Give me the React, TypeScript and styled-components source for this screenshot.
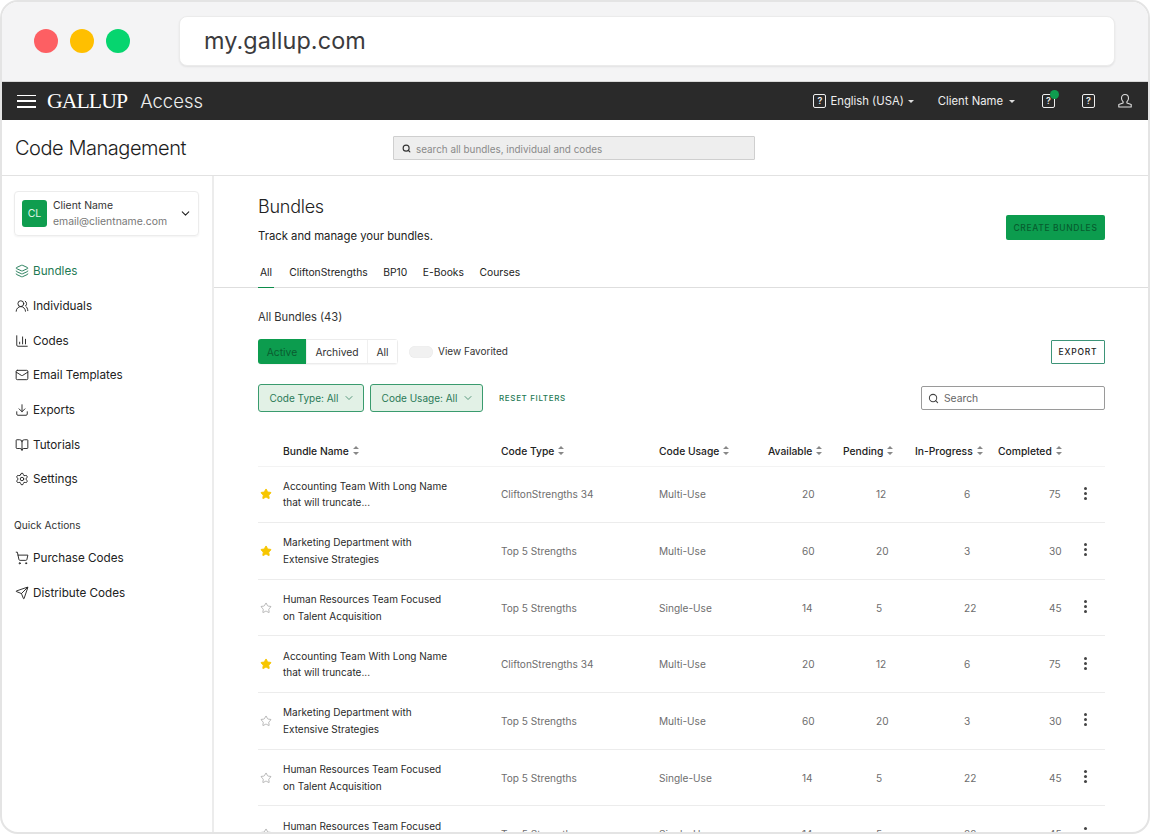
import React from 'react';
import styled, { createGlobalStyle } from 'styled-components';
import { Layers, UsersRound, ChartColumn, Mail, Download, BookOpen, Settings, ShoppingCart, Send, Star, Search, ChevronDown } from 'lucide-react';

const Global = createGlobalStyle`
  html, body { margin: 0; padding: 0; background: #fff; }
  body { font-family: Inter, "Liberation Sans", sans-serif; color: #222; }
  * { box-sizing: border-box; }
`;
const Frame = styled.div`
  width: 1150px; height: 834px; overflow: hidden; border: 2px solid #e4e4e4; border-radius: 18px;
  display: flex; flex-direction: column; background: #fff;
`;
const Chrome = styled.div`
  height: 80px; flex: none; background: #f4f4f5; display: flex; align-items: center;
  padding: 0 33px 2px 32px; gap: 49px; border-bottom: 1px solid #d8d8d8;
`;
const Dots = styled.div`display: flex; gap: 12px;`;
const Dot = styled.span<{ $c: string }>`width: 24px; height: 24px; border-radius: 50%; background: ${p => p.$c};`;
const Url = styled.div`
  flex: 1; height: 50px; background: #fff; border-radius: 8px; border: 1px solid #ebebeb; box-shadow: 0 1px 2px rgba(0,0,0,.08);
  display: flex; align-items: center; padding-left: 24px; font-size: 23.4px; color: #3b3b3d; letter-spacing: .1px;
`;
const TopBar = styled.div`
  height: 38px; flex: none; background: #2a2a2a; color: #f2f2f2; display: flex; align-items: center; padding: 0 15px 0 15px;
`;
const Burger = styled.div`
  width: 19px; height: 13px; margin-right: 10px; display: flex; flex-direction: column; justify-content: space-between;
  i { height: 1.5px; background: #fff; display: block; }
`;
const Logo = styled.span`font-family: "Liberation Serif", serif; font-size: 21.7px; letter-spacing: -.9px; color: #fff; margin-right: 13px; margin-left: 1px;`;
const Product = styled.span`font-size: 18.5px; font-weight: 300; color: #eee;`;
const Spacer = styled.div`flex: 1;`;
const TopItem = styled.span<{ $ml?: number }>`font-size: 11.3px; display: flex; align-items: center; gap: 4px; color: #eee; margin-left: ${p => p.$ml ?? 0}px;`;
const Caret = styled.i<{ $ml?: number }>`width: 0; height: 0; border: 3px solid transparent; border-top: 3.5px solid #ddd; border-bottom: 0; margin-left: ${p => p.$ml ?? 0}px;`;
const HelpBox = styled.span`
  position: relative; width: 13px; height: 14px; border: 1.3px solid #eee; border-radius: 2px; font-size: 9px; line-height: 12px; text-align: center; font-weight: 600; color: #eee; display: inline-block;
`;
const NotifDot = styled.b`position: absolute; width: 9px; height: 9px; border-radius: 50%; background: #0f9d4f; top: -5px; right: -5px;`;
const TopGroup = styled.div`display: flex; align-items: center;`;
const PageHead = styled.div`
  height: 56px; flex: none; display: flex; align-items: center; border-bottom: 1px solid #e2e2e2; padding-left: 13px;
`;
const PageTitle = styled.h1`margin: 0; padding-top: 1px; width: 378px; font-size: 20px; font-weight: 300; color: #1d1d1d; letter-spacing: -.45px;`;
const GlobalSearch = styled.div`
  width: 362px; height: 24px; background: #eeeeee; border: 1px solid #cfcfcf; display: flex; align-items: center; gap: 5px; padding: 2px 0 0 8px;
  font-size: 9.9px; color: #8a8a8a; border-radius: 1px;
`;
const Body = styled.div`flex: 1; display: flex; min-height: 0;`;
const Side = styled.aside`width: 212px; flex: none; border-right: 2px solid #ececec; padding: 15px 14px 0 12px;`;
const Account = styled.div`
  width: 185px; height: 45px; border: 1px solid #ececec; border-radius: 4px; box-shadow: 0 1px 2px rgba(0,0,0,.05); display: flex; align-items: center; padding: 0 6px 0 7px; gap: 6px; margin-bottom: 18px;
`;
const Avatar = styled.div`width: 25px; height: 27px; border-radius: 3px; background: #0f9d4f; color: #dff5e8; font-size: 10.5px; display: flex; align-items: center; justify-content: center;`;
const AccountText = styled.div`flex: 1; line-height: 15.5px; font-size: 10.4px; color: #333; span { display: block; color: #777; }`;
const NavItem = styled.div<{ $on?: boolean }>`
  height: 34.7px; display: flex; align-items: center; gap: 4px; padding-left: 1px; font-size: 11.7px; color: ${p => p.$on ? '#1f7a55' : '#222'};
  svg { flex: none; color: ${p => p.$on ? '#1f7a55' : '#222'}; }
`;
const QuickLabel = styled.div`font-size: 10.2px; color: #333; margin: 19px 0 7px; line-height: 18px;`;
const Main = styled.main`flex: 1; min-width: 0; overflow: hidden;`;
const Head = styled.div`height: 112px; padding: 18px 43px 0 44px; border-bottom: 1px solid #dedede; display: flex; position: relative;`;
const HeadText = styled.div`flex: 1;`;
const H2 = styled.h2`margin: 0; font-size: 18px; font-weight: 300; color: #222; line-height: 25px; letter-spacing: -.25px;`;
const Sub = styled.p`margin: 8px 0 0; font-size: 11.3px; color: #222; line-height: 18px;`;
const Create = styled.button`
  width: 99px; height: 25px; margin-top: 21px; background: #0c9c4e; border: 0; border-radius: 2px; color: #075c2f; font: 500 8.5px Inter, sans-serif; letter-spacing: .65px;
`;
const Tabs = styled.div`position: absolute; left: 44px; bottom: -1px; display: flex; gap: 15.6px;`;
const Tab = styled.span<{ $on?: boolean }>`
  font-size: 10.3px; color: #222; padding: 0 1.5px 8px 2px; line-height: 14px; border-bottom: 1.5px solid ${p => p.$on ? '#0c8c4a' : 'transparent'};
  &:not(:first-child){ padding: 0 0 8px; }
`;
const Content = styled.div`padding: 21px 43px 0 44px;`;
const Count = styled.div`font-size: 11.2px; color: #333; line-height: 17px; margin-bottom: 13px;`;
const Row = styled.div`display: flex; align-items: center;`;
const Seg = styled.div`display: flex; height: 25px; border: 1px solid #ececec; border-radius: 3px; margin-right: 11px; box-shadow: 0 1px 1px rgba(0,0,0,.04);`;
const SegBtn = styled.span<{ $on?: boolean; $w: number }>`
  width: ${p => p.$w}px; display: flex; align-items: center; justify-content: center; font-size: 10.3px; padding-top: 1px;
  color: ${p => p.$on ? '#0a5c30' : '#333'}; background: ${p => p.$on ? '#0c9c4e' : '#fff'}; margin: ${p => p.$on ? '-1px 0 -1px -1px' : '0'}; border-radius: ${p => p.$on ? '3px 0 0 3px' : '0'};
  & + & { border-left: 1px solid #f0f0f0; }
`;
const Toggle = styled.span`width: 24px; height: 12px; border-radius: 6px; background: #f1f1f1; margin-right: 5px; box-shadow: inset 0 0 1px rgba(0,0,0,.1);`;
const ToggleText = styled.span`font-size: 10px; color: #333; flex: 1; padding-bottom: 1px;`;
const Export = styled.button`
  width: 54px; height: 24px; background: #fff; border: 1px solid #3d9478; border-radius: 1px; font: 500 8.5px Inter, sans-serif; color: #222; letter-spacing: .8px;
`;
const Filters = styled(Row)`margin-top: 20px; gap: 6px;`;
const FilterChip = styled.span<{ $w: number }>`
  width: ${p => p.$w}px; height: 28px; background: #e2f1e6; border: 1px solid #3a9b6e; border-radius: 3px; display: flex; align-items: center; justify-content: center; gap: 5px; padding-left: 3px; font-size: 10px; color: #2a7a58;
`;
const Reset = styled.span`font-size: 8px; font-weight: 500; letter-spacing: .65px; color: #1f7a55; margin-left: 10px; flex: 1;`;
const SearchBox = styled.div`
  width: 184px; height: 24px; border: 1px solid #9a9a9a; border-radius: 2px; display: flex; align-items: center; gap: 5px; padding-left: 6px; font-size: 10.3px; color: #666;
`;
const Grid = '24px 218px 159px 109px 75px 72px 83px 87px 20px';
const THead = styled.div`display: grid; grid-template-columns: ${Grid}; height: 34.5px; margin-top: 20px; align-items: center; border-bottom: 1px solid #f3f3f3; padding-top: 4px;`;
const Th = styled.span<{ $start: number }>`font-size: 10.3px; font-weight: 500; color: #222; display: flex; align-items: center; gap: 4px; grid-column: ${p => p.$start}; white-space: nowrap; padding-left: ${p => p.$start < 4 ? 1 : 0}px;`;
const TRow = styled.div`display: grid; grid-template-columns: ${Grid}; height: 56.65px; align-items: center; border-bottom: 1.5px solid #ececec;`;
const Name = styled.div`font-size: 10px; line-height: 16.5px; color: #2a2a2a; white-space: pre-line; padding-left: 1px;`;
const Muted = styled.div`font-size: 10.1px; color: #6e6e6e;`;
const TypeCell = styled(Muted)`padding-left: 1px;`;
const Num = styled(Muted)<{ $pad: number }>`padding-left: ${p => p.$pad}px;`;
const StarCell = styled.div`display: flex; padding-left: 2px;`;
const Kebab = styled.div`width: 4px; margin-left: -2px; display: flex; flex-direction: column; gap: 2px; align-items: center; padding-bottom: 2px; i { width: 3px; height: 3px; border-radius: 50%; background: #444; display: block; }`;

const Sort = () => (
  <svg width="6" height="9" viewBox="0 0 6 9" fill="#888"><path d="M3 0 L6 3 H0 Z M3 9 L0 6 H6 Z" /></svg>
);
const Bust = () => (
  <svg width="16" height="16" viewBox="0 0 16 16" fill="none" stroke="#ddd" strokeWidth="1.1" strokeLinejoin="round">
    <path d="M8 1.5c-2.2 0-3.5 1.7-3.5 3.8 0 1.5.7 2.8 1.6 3.5v1.2L1.8 11.6v2.4h12.4v-2.4L9.9 10V8.8c.9-.7 1.6-2 1.6-3.5 0-2.1-1.3-3.8-3.5-3.8z" />
  </svg>
);
const nav: [any, string][] = [[UsersRound, 'Individuals'], [ChartColumn, 'Codes'], [Mail, 'Email Templates'], [Download, 'Exports'], [BookOpen, 'Tutorials'], [Settings, 'Settings']];
const heads = ['Bundle Name', 'Code Type', 'Code Usage', 'Available', 'Pending', 'In-Progress', 'Completed'];
const rows = [
  ['Accounting Team With Long Name\nthat will truncate...', 'CliftonStrengths 34', 'Multi-Use', '20', '12', '6', '75', 1],
  ['Marketing Department with\nExtensive Strategies', 'Top 5 Strengths', 'Multi-Use', '60', '20', '3', '30', 1],
  ['Human Resources Team Focused\non Talent Acquisition', 'Top 5 Strengths', 'Single-Use', '14', '5', '22', '45', 0],
  ['Accounting Team With Long Name\nthat will truncate...', 'CliftonStrengths 34', 'Multi-Use', '20', '12', '6', '75', 1],
  ['Marketing Department with\nExtensive Strategies', 'Top 5 Strengths', 'Multi-Use', '60', '20', '3', '30', 0],
  ['Human Resources Team Focused\non Talent Acquisition', 'Top 5 Strengths', 'Single-Use', '14', '5', '22', '45', 0],
  ['Human Resources Team Focused\non Talent Acquisition', 'Top 5 Strengths', 'Single-Use', '14', '5', '22', '45', 0],
] as const;
const colStart = [2, 3, 4, 5, 6, 7, 8];

export default function App() {
  return (
    <>
      <Global />
      <Frame>
        <Chrome>
          <Dots><Dot $c="#fd5f63" /><Dot $c="#ffbf00" /><Dot $c="#06d56f" /></Dots>
          <Url>my.gallup.com</Url>
        </Chrome>
        <TopBar>
          <Burger><i /><i /><i /></Burger>
          <Logo>GALLUP</Logo>
          <Product>Access</Product>
          <Spacer />
          <TopGroup>
            <TopItem><HelpBox>?</HelpBox>English (USA)<Caret /></TopItem>
            <TopItem $ml={24}>Client Name<Caret $ml={2} /></TopItem>
            <TopItem $ml={27}><HelpBox>?<NotifDot /></HelpBox></TopItem>
            <TopItem $ml={27}><HelpBox>?</HelpBox></TopItem>
            <TopItem $ml={22}><Bust /></TopItem>
          </TopGroup>
        </TopBar>
        <PageHead>
          <PageTitle>Code Management</PageTitle>
          <GlobalSearch><Search size={9} strokeWidth={3} color="#333" />search all bundles, individual and codes</GlobalSearch>
        </PageHead>
        <Body>
          <Side>
            <Account>
              <Avatar>CL</Avatar>
              <AccountText>Client Name<span>email@clientname.com</span></AccountText>
              <ChevronDown size={13} color="#222" strokeWidth={2} />
            </Account>
            <NavItem $on><Layers size={14} strokeWidth={1.6} />Bundles</NavItem>
            {nav.map(([I, t]) => <NavItem key={t}><I size={14} strokeWidth={1.6} />{t}</NavItem>)}
            <QuickLabel>Quick Actions</QuickLabel>
            <NavItem><ShoppingCart size={14} strokeWidth={1.6} />Purchase Codes</NavItem>
            <NavItem><Send size={14} strokeWidth={1.6} />Distribute Codes</NavItem>
          </Side>
          <Main>
            <Head>
              <HeadText>
                <H2>Bundles</H2>
                <Sub>Track and manage your bundles.</Sub>
              </HeadText>
              <Create>CREATE BUNDLES</Create>
              <Tabs>
                <Tab $on>All</Tab><Tab>CliftonStrengths</Tab><Tab>BP10</Tab><Tab>E-Books</Tab><Tab>Courses</Tab>
              </Tabs>
            </Head>
            <Content>
              <Count>All Bundles (43)</Count>
              <Row>
                <Seg>
                  <SegBtn $on $w={48}>Active</SegBtn><SegBtn $w={61}>Archived</SegBtn><SegBtn $w={30}>All</SegBtn>
                </Seg>
                <Toggle /><ToggleText>View Favorited</ToggleText>
                <Export>EXPORT</Export>
              </Row>
              <Filters>
                <FilterChip $w={106}>Code Type: All<ChevronDown size={12} strokeWidth={1.5} /></FilterChip>
                <FilterChip $w={113}>Code Usage: All<ChevronDown size={12} strokeWidth={1.5} /></FilterChip>
                <Reset>RESET FILTERS</Reset>
                <SearchBox><Search size={11} strokeWidth={2.2} color="#444" />Search</SearchBox>
              </Filters>
              <THead>
                {heads.map((h, i) => <Th key={h} $start={colStart[i]}>{h}<Sort /></Th>)}
              </THead>
              {rows.map((r, i) => (
                <TRow key={i}>
                  <StarCell>
                    {r[7] ? <Star size={12} fill="#f7c600" color="#f7c600" /> : <Star size={12} color="#8c8c8c" strokeWidth={1.2} />}
                  </StarCell>
                  <Name>{r[0]}</Name>
                  <TypeCell>{r[1]}</TypeCell>
                  <Muted>{r[2]}</Muted>
                  <Num $pad={34}>{r[3]}</Num>
                  <Num $pad={33}>{r[4]}</Num>
                  <Num $pad={49}>{r[5]}</Num>
                  <Num $pad={51}>{r[6]}</Num>
                  <Kebab><i /><i /><i /></Kebab>
                </TRow>
              ))}
            </Content>
          </Main>
        </Body>
      </Frame>
    </>
  );
}
